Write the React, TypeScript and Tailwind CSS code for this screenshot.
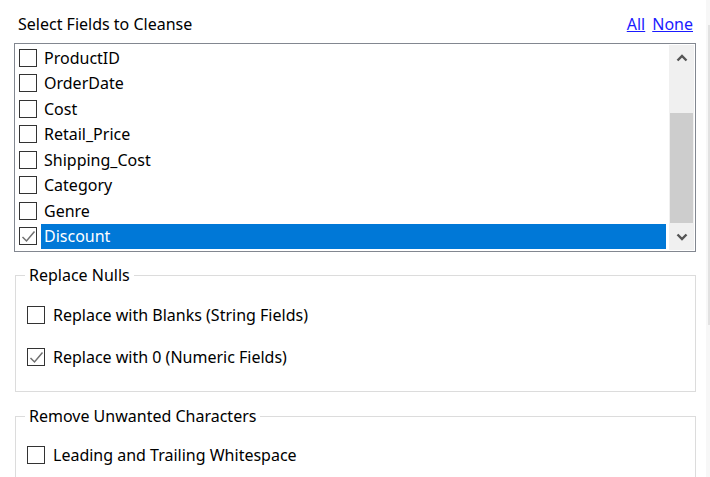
import React from "react";

const fields = [
  { name: "ProductID", checked: false },
  { name: "OrderDate", checked: false },
  { name: "Cost", checked: false },
  { name: "Retail_Price", checked: false },
  { name: "Shipping_Cost", checked: false },
  { name: "Category", checked: false },
  { name: "Genre", checked: false },
  { name: "Discount", checked: true },
];

const font = "font-['Segoe_UI','Noto_Sans',sans-serif]";

// Classic Windows style checkbox
function Box({ checked }: { checked?: boolean }) {
  return (
    <span className="w-[18px] h-[18px] border-[1.5px] border-[#333] bg-white flex items-center justify-center shrink-0">
      {checked && (
        <svg width="15" height="15" viewBox="0 0 15 15">
          <polyline points="1.5,8 5.5,12 13.5,2.5" fill="none" stroke="#707070" strokeWidth="1.5" />
        </svg>
      )}
    </span>
  );
}

function Chevron({ up }: { up?: boolean }) {
  return (
    <svg width="12" height="8" viewBox="0 0 12 8">
      <polyline
        points={up ? "1.5,6.5 6,2 10.5,6.5" : "1.5,1.5 6,6 10.5,1.5"}
        fill="none"
        stroke="#555"
        strokeWidth="2.4"
      />
    </svg>
  );
}

function Group({ title, children, className = "" }: { title: string; children: React.ReactNode; className?: string }) {
  return (
    <fieldset className={`shrink-0 ml-[15px] w-[681px] border border-[#dcdcdc] pl-[9px] ${className}`}>
      <legend className="px-[4px] leading-[20px] text-[16px] text-black">{title}</legend>
      {children}
    </fieldset>
  );
}

function Option({ label, checked }: { label: string; checked?: boolean }) {
  return (
    <label className="flex items-center h-[20px] ml-[2px] gap-[8px] text-[16px] text-black">
      <Box checked={checked} />
      <span>{label}</span>
    </label>
  );
}

export default function App() {
  return (
    <div className={`w-[710px] h-[477px] overflow-hidden bg-white flex ${font}`}>
      <div className="w-[706px] flex flex-col">
        {/* Header */}
        <div className="shrink-0 h-[43px] pt-[14px] flex items-start text-[16px] leading-[20px]">
          <span className="ml-[18px] text-black">Select Fields to Cleanse</span>
          <span className="ml-auto mr-[13px] flex gap-[7px]">
            <a className="text-[#1a1aff] underline">All</a>
            <a className="text-[#1a1aff] underline">None</a>
          </span>
        </div>

        {/* Field list */}
        <div className="shrink-0 ml-[14px] w-[682px] h-[209px] border border-[#828790] p-px flex">
          <div className="flex-1 flex flex-col">
            {fields.map((f) => (
              <div key={f.name} className="h-[25.5px] flex items-center pl-[3px]">
                <Box checked={f.checked} />
                <span
                  className={`ml-[4px] mr-[3px] flex-1 h-full flex items-center pl-[3px] text-[16px] ${
                    f.checked ? "bg-[#0078d7] text-white" : "text-black"
                  }`}
                >
                  {f.name}
                </span>
              </div>
            ))}
          </div>
          <div className="w-[25px] bg-[#f0f0f0] flex flex-col items-center">
            <div className="h-[26px] flex items-center justify-center">
              <Chevron up />
            </div>
            <div className="flex-1 w-full pt-[42px] px-px">
              <div className="h-[110px] bg-[#cdcdcd]" />
            </div>
            <div className="h-[26px] flex items-center justify-center">
              <Chevron />
            </div>
          </div>
        </div>

        {/* Replace Nulls */}
        <Group title="Replace Nulls" className="mt-[13px] h-[127px]">
          <div className="pt-[20px] flex flex-col gap-[22px]">
            <Option label="Replace with Blanks (String Fields)" />
            <Option label="Replace with 0 (Numeric Fields)" checked />
          </div>
        </Group>

        {/* Remove Unwanted Characters */}
        <Group title="Remove Unwanted Characters" className="mt-[14px] h-[120px]">
          <div className="pt-[19px]">
            <Option label="Leading and Trailing Whitespace" />
          </div>
        </Group>
      </div>

      {/* outer scrollbar edge */}
      <div className="w-[4px] bg-[#f7f7f7] flex flex-col">
        <div className="h-[25px]" />
        <div className="ml-[2px] w-[2px] h-[300px] bg-[#e2e2e2]" />
      </div>
    </div>
  );
}
